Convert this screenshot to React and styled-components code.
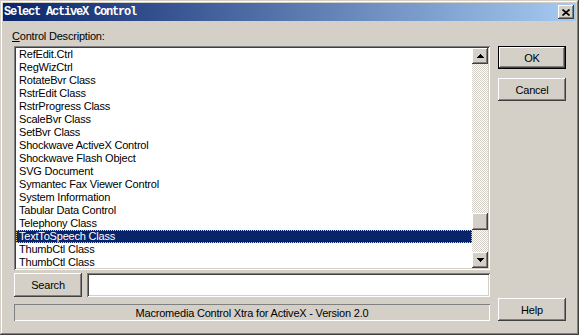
import React from "react";
import styled, { createGlobalStyle, css } from "styled-components";

const GlobalStyle = createGlobalStyle`
  html, body { margin: 0; padding: 0; background: #d4d0c8; }
  body { font-family: "Liberation Sans", Arial, sans-serif; font-size: 11px; letter-spacing: -0.2px; color: #000; }
`;

const raised = css`
  box-shadow: inset -1px -1px #404040, inset 1px 1px #ffffff,
    inset -2px -2px #808080, inset 2px 2px #d4d0c8;
`;
const sunken = css`
  box-shadow: inset 1px 1px #808080, inset -1px -1px #ffffff,
    inset 2px 2px #404040, inset -2px -2px #d4d0c8;
`;

const Window = styled.div`
  width: 579px;
  height: 335px;
  box-sizing: border-box;
  padding: 3px;
  background: #d4d0c8;
  display: flex;
  flex-direction: column;
  box-shadow: inset -1px -1px #404040, inset 1px 1px #d4d0c8,
    inset -2px -2px #808080, inset 2px 2px #ffffff;
`;

const TitleBar = styled.div`
  height: 18px;
  display: flex;
  align-items: center;
  justify-content: space-between;
  padding: 0 2px 0 1px;
  background: linear-gradient(to right, #0a246a, #a6caf0);
`;

const TitleText = styled.span`
  font-family: "Liberation Mono", "Courier New", monospace;
  font-weight: bold;
  font-size: 12px;
  letter-spacing: -1.2px;
  color: #ffffff;
  white-space: pre;
`;

const CloseButton = styled.div`
  width: 16px;
  height: 14px;
  background: #d4d0c8;
  ${raised};
  display: flex;
  align-items: center;
  justify-content: center;
`;

const Body = styled.div`
  flex: 1;
  display: flex;
  gap: 8px;
  padding: 9px 10px 0 11px;
`;

const Main = styled.div`
  width: 476px;
  display: flex;
  flex-direction: column;
`;

const Side = styled.div`
  width: 68px;
  display: flex;
  flex-direction: column;
  gap: 9px;
  padding-top: 16px;
  height: 291px;
  box-sizing: border-box;
`;

const Label = styled.div`
  height: 13px;
  line-height: 13px;
  margin-left: -2px;
  margin-bottom: 3px;
  u { text-decoration: underline; text-underline-offset: 1px; }
`;

const ListBox = styled.div`
  height: 224px;
  box-sizing: border-box;
  padding: 2px;
  background: #ffffff;
  ${sunken};
  display: flex;
`;

const Items = styled.div`
  flex: 1;
  overflow: hidden;
`;

const Item = styled.div`
  height: 13px;
  line-height: 13px;
  padding-left: 3px;
  white-space: nowrap;
  box-sizing: border-box;
  ${(p) =>
    p.$selected &&
    css`
      background: #0a246a;
      color: #ffffff;
      outline: 1px dotted #e6cf7a;
      outline-offset: -1px;
    `}
`;

const ScrollBar = styled.div`
  width: 16px;
  display: flex;
  flex-direction: column;
`;

const ScrollButton = styled.div`
  width: 16px;
  height: 16px;
  flex: none;
  background: #d4d0c8;
  ${raised};
  display: flex;
  align-items: center;
  justify-content: center;
`;

const Track = styled.div`
  flex: 1;
  display: flex;
  flex-direction: column;
  background-color: #d4d0c8;
  background-image: conic-gradient(#ffffff 25%, #d4d0c8 0 50%, #ffffff 0 75%, #d4d0c8 0);
  background-size: 2px 2px;
`;

const Thumb = styled.div`
  width: 16px;
  height: 17px;
  background: #d4d0c8;
  ${raised};
`;

const SearchRow = styled.div`
  display: flex;
  gap: 5px;
  height: 24px;
  margin-top: 3px;
`;

const Button = styled.div`
  width: 68px;
  height: ${(p) => p.$h || 23}px;
  flex: none;
  box-sizing: border-box;
  display: flex;
  align-items: center;
  justify-content: center;
  background: #d4d0c8;
  ${(p) =>
    p.$default
      ? css`
          box-shadow: inset 0 0 0 1px #000000, inset -2px -2px #404040,
            inset 2px 2px #ffffff, inset -3px -3px #808080;
        `
      : raised};
  ${(p) => p.$push && css`margin-top: auto;`}
`;

const TextField = styled.div`
  flex: 1;
  background: #ffffff;
  ${sunken};
`;

const StatusBar = styled.div`
  height: 17px;
  margin-top: 7px;
  box-sizing: border-box;
  display: flex;
  align-items: center;
  justify-content: center;
  box-shadow: inset 1px 1px #808080, inset -1px -1px #ffffff;
`;

const items = [
  "RefEdit.Ctrl",
  "RegWizCtrl",
  "RotateBvr Class",
  "RstrEdit Class",
  "RstrProgress Class",
  "ScaleBvr Class",
  "SetBvr Class",
  "Shockwave ActiveX Control",
  "Shockwave Flash Object",
  "SVG Document",
  "Symantec Fax Viewer Control",
  "System Information",
  "Tabular Data Control",
  "Telephony Class",
  "TextToSpeech Class",
  "ThumbCtl Class",
  "ThumbCtl Class",
];

const Arrow = ({ down }) => (
  <svg width="7" height="4" viewBox="0 0 7 4">
    <path d={down ? "M0 0h7L3.5 4z" : "M3.5 0L7 4H0z"} fill="#000" shapeRendering="crispEdges" />
  </svg>
);

export default function App() {
  const scrollFraction = 0.87;
  const trackHeight = 188 - 17;
  return (
    <>
      <GlobalStyle />
      <Window>
        <TitleBar>
          <TitleText>Select ActiveX Control</TitleText>
          <CloseButton>
            <svg width="8" height="7" viewBox="0 0 8 7">
              <path d="M0.5 0.5L7.5 6.5M7.5 0.5L0.5 6.5" stroke="#000" strokeWidth="1.6" />
            </svg>
          </CloseButton>
        </TitleBar>
        <Body>
          <Main>
            <Label>
              <u>C</u>ontrol Description:
            </Label>
            <ListBox>
              <Items>
                {items.map((t, i) => (
                  <Item key={i} $selected={i === 14}>
                    {t}
                  </Item>
                ))}
              </Items>
              <ScrollBar>
                <ScrollButton>
                  <Arrow />
                </ScrollButton>
                <Track>
                  <Thumb style={{ marginTop: Math.round(scrollFraction * trackHeight) }} />
                </Track>
                <ScrollButton>
                  <Arrow down />
                </ScrollButton>
              </ScrollBar>
            </ListBox>
            <SearchRow>
              <Button $h={24}>Search</Button>
              <TextField />
            </SearchRow>
            <StatusBar>Macromedia Control Xtra for ActiveX - Version 2.0</StatusBar>
          </Main>
          <Side>
            <Button $default>OK</Button>
            <Button>Cancel</Button>
            <Button $push>Help</Button>
          </Side>
        </Body>
      </Window>
    </>
  );
}
